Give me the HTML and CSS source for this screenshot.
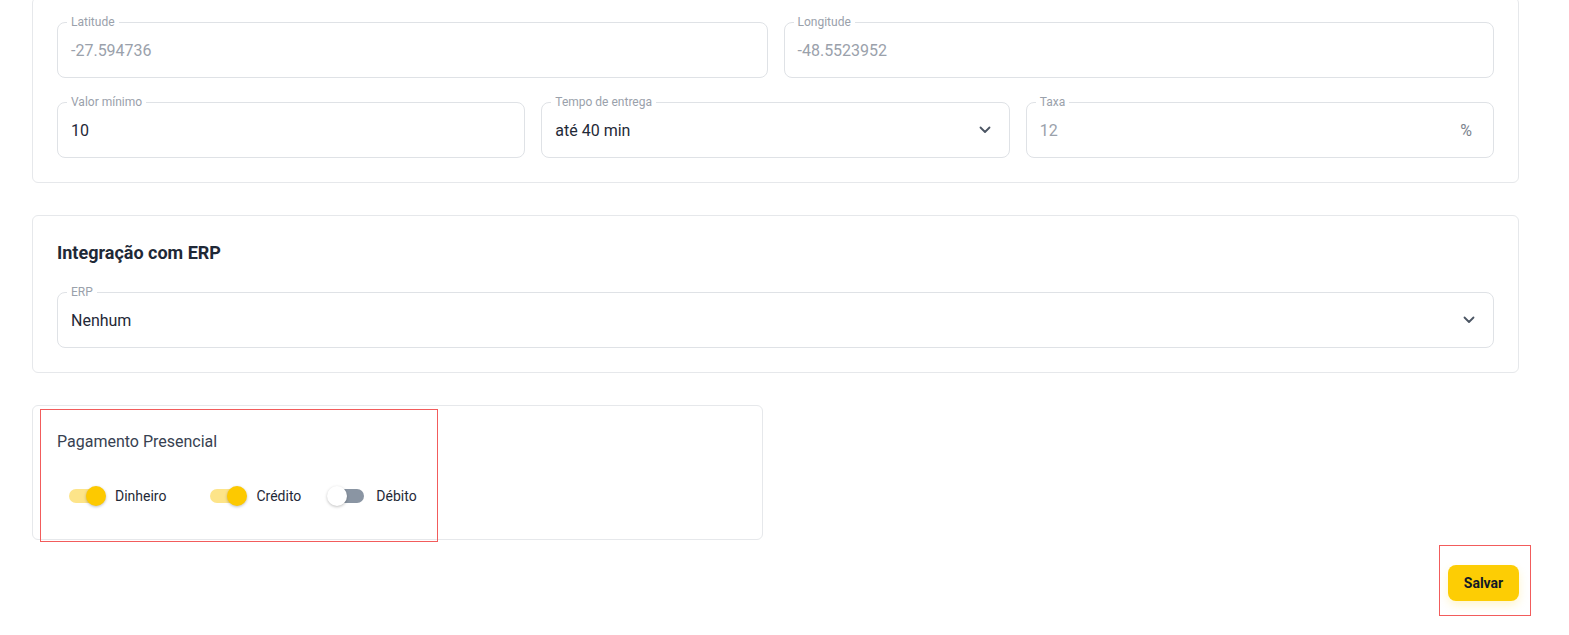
FILE: index.html
```html
<!DOCTYPE html>
<html lang="pt-BR">
<head>
    <meta charset="UTF-8">
    <meta name="viewport" content="width=device-width, initial-scale=1.0">
    <title>Configurações da loja</title>
    <link rel="stylesheet" href="styles.css">
</head>
<body>
    <div class="page">
        <div class="card card-location">
            <div class="row row-2">
                <div class="field disabled">
                    <span class="field-label">Latitude</span>
                    <span class="field-value">-27.594736</span>
                </div>
                <div class="field disabled">
                    <span class="field-label">Longitude</span>
                    <span class="field-value">-48.5523952</span>
                </div>
            </div>
            <div class="row row-3">
                <div class="field">
                    <span class="field-label">Valor mínimo</span>
                    <span class="field-value">10</span>
                </div>
                <div class="field">
                    <span class="field-label">Tempo de entrega</span>
                    <span class="field-value">até 40 min</span>
                    <svg class="chevron" width="12" height="8" viewBox="0 0 12 8"><polyline points="1.5,1.5 6,6 10.5,1.5" fill="none" stroke="#4b5563" stroke-width="1.8" stroke-linecap="round" stroke-linejoin="round"/></svg>
                </div>
                <div class="field disabled">
                    <span class="field-label">Taxa</span>
                    <span class="field-value">12</span>
                    <span class="suffix">%</span>
                </div>
            </div>
        </div>

        <div class="card">
            <h2 class="card-title">Integração com ERP</h2>
            <div class="field">
                <span class="field-label">ERP</span>
                <span class="field-value">Nenhum</span>
                <svg class="chevron" width="12" height="8" viewBox="0 0 12 8"><polyline points="1.5,1.5 6,6 10.5,1.5" fill="none" stroke="#4b5563" stroke-width="1.8" stroke-linecap="round" stroke-linejoin="round"/></svg>
            </div>
        </div>

        <div class="card card-payment">
            <div class="highlight highlight-payment"></div>
            <div class="payment-title">Pagamento Presencial</div>
            <div class="switches">
                <label class="switch-label wide">
                    <span class="switch on"><span class="track"></span><span class="thumb"></span></span>
                    <span>Dinheiro</span>
                </label>
                <label class="switch-label">
                    <span class="switch on"><span class="track"></span><span class="thumb"></span></span>
                    <span>Crédito</span>
                </label>
                <label class="switch-label">
                    <span class="switch"><span class="track"></span><span class="thumb"></span></span>
                    <span>Débito</span>
                </label>
            </div>
        </div>

        <div class="actions">
            <div class="save-wrap">
                <div class="highlight highlight-save"></div>
                <button class="save-btn">Salvar</button>
            </div>
        </div>
    </div>
</body>
</html>
```

FILE: styles.css
```css
body {
    margin: 0;
    background: #fff;
    font-family: Roboto, "Noto Sans", sans-serif;
    color: #1f2937;
}
.page {
    width: 1487px;
    margin-left: 32px;
    padding-bottom: 40px;
}
.card {
    border: 1px solid #e6e8eb;
    border-radius: 6px;
    padding: 24px;
    margin-bottom: 32px;
    background: #fff;
    position: relative;
}
.card-location {
    margin-top: -3px;
}
.row {
    display: grid;
    gap: 16px;
}
.row + .row {
    margin-top: 24px;
}
.row-2 {
    grid-template-columns: 1fr 1fr;
}
.row-3 {
    grid-template-columns: 1fr 1fr 1fr;
}
.field {
    position: relative;
    height: 56px;
    box-sizing: border-box;
    border: 1px solid #dfe2e6;
    border-radius: 8px;
    display: flex;
    align-items: center;
    padding: 0 13px;
}
.field-label {
    position: absolute;
    top: -9px;
    left: 9px;
    padding: 0 4px;
    background: #fff;
    font-size: 12px;
    line-height: 16px;
    color: #9aa1ab;
}
.field-value {
    flex: 1;
    font-size: 16px;
    color: #1f2937;
}
.disabled .field-value {
    color: #9aa1ab;
}
.chevron {
    margin-right: 5px;
}
.suffix {
    font-size: 16px;
    color: #7b838e;
    margin-right: 8px;
}
.card-title {
    margin: 0 0 26px;
    font-size: 18px;
    line-height: 26px;
    font-weight: 700;
    color: #1f2937;
}
.card-payment {
    width: 731px;
    box-sizing: border-box;
}
.payment-title {
    font-size: 16px;
    line-height: 24px;
    color: #374151;
    margin-bottom: 23px;
}
.switches {
    display: flex;
    align-items: center;
}
.switch-label {
    display: flex;
    align-items: center;
    font-size: 14px;
    color: #1f2937;
    margin-right: 17px;
}
.switch-label.wide {
    margin-right: 32px;
}
.switch {
    position: relative;
    width: 58px;
    height: 38px;
    flex: none;
}
.track {
    position: absolute;
    left: 12px;
    top: 12px;
    width: 34px;
    height: 14px;
    border-radius: 7px;
    background: #8a95a3;
}
.thumb {
    position: absolute;
    left: 9px;
    top: 9px;
    width: 20px;
    height: 20px;
    border-radius: 50%;
    background: #fff;
    box-shadow: 0 1px 3px rgba(0, 0, 0, 0.25);
}
.switch.on .track {
    background: #fde489;
}
.switch.on .thumb {
    left: 29px;
    background: #fdc900;
}
.actions {
    display: flex;
    justify-content: flex-end;
    margin-top: -7px;
}
.save-wrap {
    position: relative;
}
.save-btn {
    display: block;
    width: 71px;
    height: 36px;
    border: none;
    border-radius: 8px;
    background: #fdcd04;
    font-family: Roboto, "Noto Sans", sans-serif;
    font-size: 14px;
    font-weight: 700;
    color: #111827;
    box-shadow: 0 4px 10px rgba(253, 205, 4, 0.2);
    cursor: pointer;
}
.highlight {
    position: absolute;
    border: 1px solid #f25c5c;
    pointer-events: none;
}
.highlight-payment {
    left: 7px;
    top: 3px;
    width: 396px;
    height: 131px;
}
.highlight-save {
    left: -9px;
    top: -20px;
    width: 90px;
    height: 69px;
}
```
